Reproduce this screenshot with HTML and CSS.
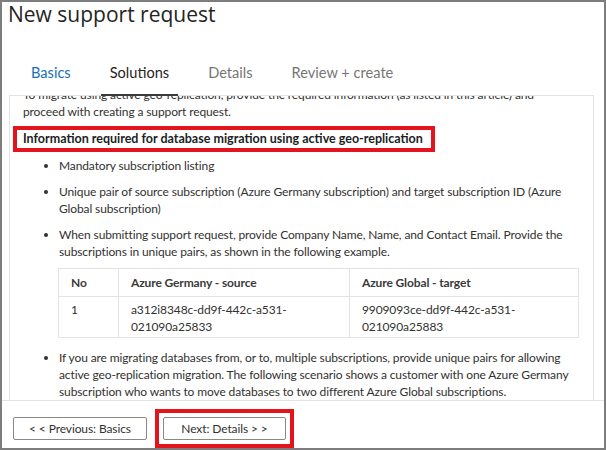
FILE: index.html
```html
<!DOCTYPE html>
<html lang="en">
<head>
<meta charset="utf-8">
<title>New support request</title>
<link rel="stylesheet" href="styles.css">
</head>
<body>
<div class="frame">
  <header class="head">
    <h1 class="title">New support request</h1>
    <nav class="tabs">
      <span class="tab tab-blue">Basics</span>
      <span class="tab tab-active">Solutions</span>
      <span class="tab">Details</span>
      <span class="tab">Review + create</span>
    </nav>
  </header>
  <main class="content">
    <div class="doc">
      <p class="intro">To migrate using active geo-replication, provide the required information (as listed in this article) and proceed with creating a support request.</p>
      <div class="callout">Information required for database migration using active geo-replication</div>
      <ul class="list">
        <li>Mandatory subscription listing</li>
        <li>Unique pair of source subscription (Azure Germany subscription) and target subscription ID (Azure Global subscription)</li>
        <li>When submitting support request, provide Company Name, Name, and Contact Email. Provide the subscriptions in unique pairs, as shown in the following example.
          <table class="pairs">
            <thead>
              <tr><th class="c-no">No</th><th class="c-src">Azure Germany - source</th><th>Azure Global - target</th></tr>
            </thead>
            <tbody>
              <tr><td>1</td><td>a312i8348c-dd9f-442c-a531-<br>021090a25833</td><td>9909093ce-dd9f-442c-a531-<br>021090a25883</td></tr>
            </tbody>
          </table>
        </li>
        <li>If you are migrating databases from, or to, multiple subscriptions, provide unique pairs for allowing active geo-replication migration. The following scenario shows a customer with one Azure Germany subscription who wants to move databases to two different Azure Global subscriptions.</li>
      </ul>
    </div>
  </main>
  <footer class="foot">
    <button class="btn btn-prev" type="button">&lt; &lt; Previous: Basics</button>
    <div class="highlight"><button class="btn btn-next" type="button">Next: Details &gt; &gt;</button></div>
  </footer>
</div>
</body>
</html>
```
FILE: styles.css
```css
* { box-sizing: border-box; }
html, body { margin: 0; padding: 0; background: #fff; }
body {
  font-family: Lato, "Open Sans", sans-serif;
  color: #323130;
}
.frame {
  width: 606px;
  height: 450px;
  border: 2px solid #7d7d7d;
  display: flex;
  flex-direction: column;
  overflow: hidden;
}
.head {
  height: 93px;
  flex: none;
  display: flex;
  flex-direction: column;
  position: relative;
  z-index: 1;
}
.title {
  margin: 0 0 0 6px;
  font-family: "Open Sans", sans-serif;
  font-size: 21px;
  line-height: 24px;
  font-weight: 400;
  color: #252423;
}
.tabs {
  margin-top: auto;
  display: flex;
  gap: 21px;
  padding-left: 20px;
  margin-bottom: -1px;
}
.tab {
  font-size: 14.6px;
  line-height: 20px;
  padding: 0 9px 11px;
  border-bottom: 2px solid transparent;
  color: #767676;
}
.tab-blue { color: #1a6fb5; }
.tab-active { color: #252423; border-bottom-color: #3b3a39; }
.content {
  flex: 1;
  min-height: 0;
  margin: 0 10px 0 7px;
  border: 1px solid #e3e3e3;
  border-bottom: none;
  overflow: hidden;
}
.doc {
  margin-top: -10px;
  padding: 0 14px 0 13px;
  font-size: 12px;
  letter-spacing: -0.12px;
  line-height: 17px;
}
.intro { margin: 0; padding-right: 32px; }
.callout {
  width: fit-content;
  margin: 6px 0 0 -10px;
  border: 4px solid #e3141c;
  padding: 0 8px 0 6px;
  font-size: 12.5px;
  letter-spacing: 0;
  font-weight: 700;
  line-height: 18px;
  color: #201f1e;
}
.list {
  margin: 5px 0 0;
  padding-left: 36px;
}
.list li { margin-bottom: 9px; }
.pairs {
  margin: 8px 0 11px -1px;
  border-collapse: collapse;
  width: 521px;
  font-size: 12px;
}
.pairs th, .pairs td {
  border: 1px solid #e3e3e3;
  text-align: left;
  vertical-align: top;
  padding: 5px 12px;
}
.pairs th { font-weight: 700; color: #3b3a39; }
.pairs td { padding: 4px 12px 2px; line-height: 17px; }
.c-no { width: 60px; }
.c-src { width: 231px; }
.foot {
  flex: none;
  height: 48px;
  border-top: 1px solid #e3e3e3;
  display: flex;
  align-items: flex-start;
  gap: 8px;
  padding: 8px 0 0 11px;
}
.btn {
  font-family: inherit;
  font-size: 12px;
  letter-spacing: -0.1px;
  line-height: 17px;
  color: #323130;
  background: #fff;
  border: 1px solid #8a8886;
  border-radius: 2px;
  height: 23px;
  padding: 0;
  margin: 0;
}
.btn-prev { width: 134px; margin-top: 8px; }
.btn-next { width: 123px; display: block; }
.highlight {
  border: 4px solid #e3141c;
  padding: 4px;
}
```
